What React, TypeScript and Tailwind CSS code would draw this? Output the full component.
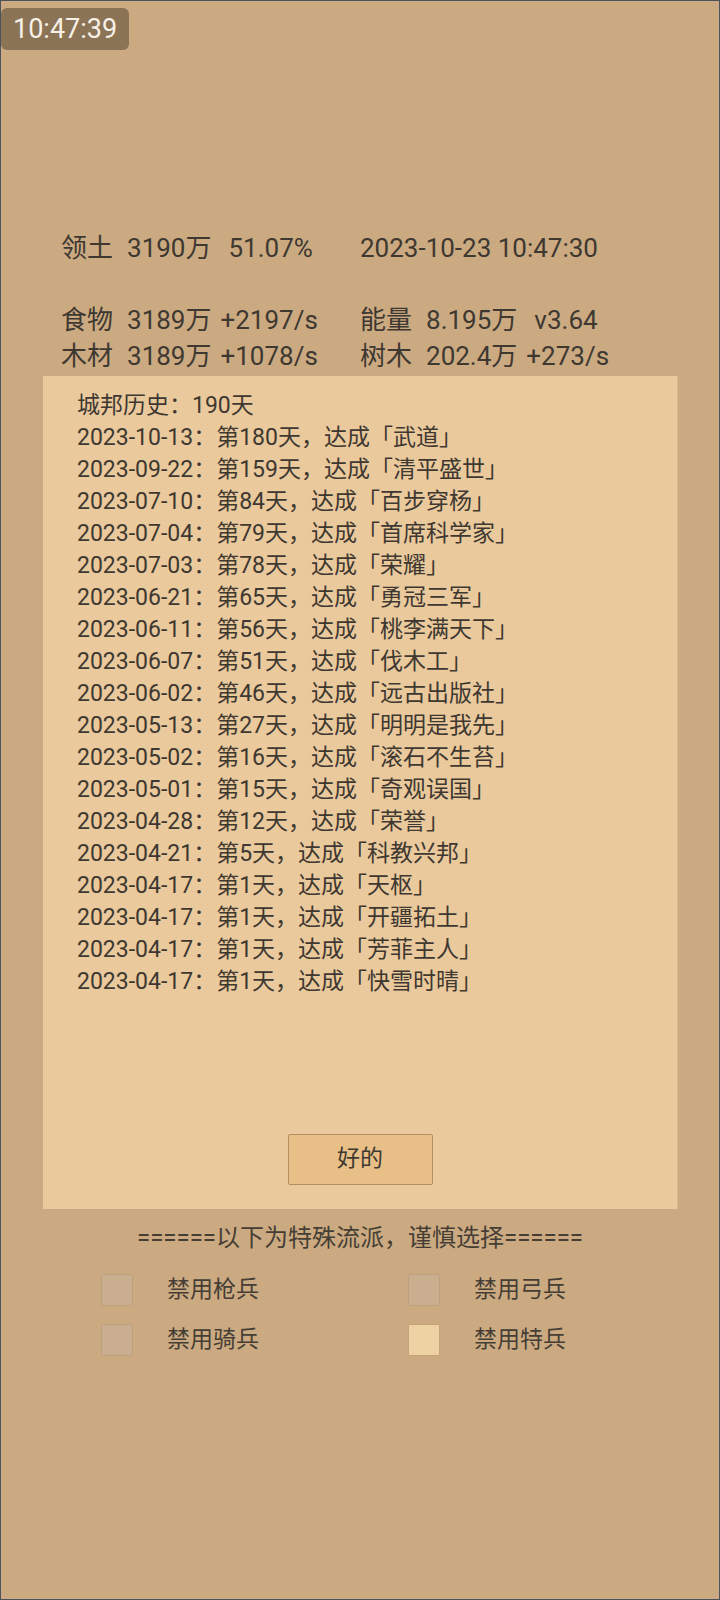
import React from 'react'

const stats = [
  [
    ['领土', '3190万', '51.07%'],
    ['', '2023-10-23 10:47:30', ''],
  ],
  null,
  [
    ['食物', '3189万', '+2197/s'],
    ['能量', '8.195万', 'v3.64'],
  ],
  [
    ['木材', '3189万', '+1078/s'],
    ['树木', '202.4万', '+273/s'],
  ],
] as const

const history = [
  ['2023-10-13', '第180天', '武道'],
  ['2023-09-22', '第159天', '清平盛世'],
  ['2023-07-10', '第84天', '百步穿杨'],
  ['2023-07-04', '第79天', '首席科学家'],
  ['2023-07-03', '第78天', '荣耀'],
  ['2023-06-21', '第65天', '勇冠三军'],
  ['2023-06-11', '第56天', '桃李满天下'],
  ['2023-06-07', '第51天', '伐木工'],
  ['2023-06-02', '第46天', '远古出版社'],
  ['2023-05-13', '第27天', '明明是我先'],
  ['2023-05-02', '第16天', '滚石不生苔'],
  ['2023-05-01', '第15天', '奇观误国'],
  ['2023-04-28', '第12天', '荣誉'],
  ['2023-04-21', '第5天', '科教兴邦'],
  ['2023-04-17', '第1天', '天枢'],
  ['2023-04-17', '第1天', '开疆拓土'],
  ['2023-04-17', '第1天', '芳菲主人'],
  ['2023-04-17', '第1天', '快雪时晴'],
]

const bans = [
  ['禁用枪兵', false],
  ['禁用弓兵', false],
  ['禁用骑兵', false],
  ['禁用特兵', true],
] as const

function StatCell({ cell }: { cell: readonly [string, string, string] }) {
  const [label, value, rate] = cell
  // "+" rates sit a little closer to the value than the others
  const rateGap = rate.startsWith('+') ? 'ml-[9px]' : 'ml-[17px]'
  return (
    <div className="whitespace-nowrap">
      {label && <span>{label}</span>}
      <span className={label ? 'ml-[14px]' : ''}>{value}</span>
      {rate && <span className={rateGap}>{rate}</span>}
    </div>
  )
}

export default function App() {
  return (
    <div
      className="relative w-[720px] h-[1600px] bg-[#cbaa81] border border-[#4d535c] text-[#3e3831] overflow-hidden"
      style={{ fontFamily: "Roboto, 'Noto Sans CJK SC', sans-serif" }}
    >
      {/* clock badge */}
      <div className="absolute left-0 top-[7px] w-[128px] h-[42px] rounded-md bg-[#8b7355] text-[#f6f0e6] text-[27px] leading-[42px] pl-[12px]">
        10:47:39
      </div>

      {/* stats */}
      <div className="pt-[229px] pl-[60px] text-[26px] leading-[36px]">
        {stats.map((row, i) =>
          row ? (
            <div key={i} className="grid grid-cols-[299px_1fr]">
              <StatCell cell={row[0]} />
              <StatCell cell={row[1]} />
            </div>
          ) : (
            <div key={i} className="h-[36px]" />
          )
        )}
      </div>

      {/* history dialog */}
      <div className="ml-[42px] mt-[2px] w-[634px] h-[833px] bg-[#eac99c] shadow-[1px_0_0_#d9b98c] flex flex-col pl-[34px] pt-[14px] pb-[24px]">
        <div className="text-[23px] leading-[32px]">
          <div>城邦历史：190天</div>
          {history.map(([date, day, name], i) => (
            <div key={i} className="whitespace-nowrap">
              {date}：{day}，达成「{name}」
            </div>
          ))}
        </div>
        <div className="mt-auto flex justify-center pr-[34px]">
          <button className="w-[145px] h-[51px] bg-[#e8bf86] border border-[#b48f60] rounded-[2px] text-[23px] text-[#3e3831]">
            好的
          </button>
        </div>
      </div>

      {/* special options */}
      <div className="mt-[14px] text-center text-[24px] leading-[30px] text-[#463e35]">
        ======以下为特殊流派，谨慎选择======
      </div>
      <div className="mt-[20px] pl-[100px] grid grid-cols-[307px_1fr] gap-y-[15px]">
        {bans.map(([label, checked]) => (
          <div key={label} className="flex items-center">
            <div
              className={
                checked
                  ? 'w-[32px] h-[32px] rounded-[2px] bg-[#efd2a4] border border-[#c4a37a]'
                  : 'w-[32px] h-[32px] rounded-[2px] bg-[#c9ae8f] border border-[#bfa07d]'
              }
            />
            <span className="ml-[34px] text-[23px] text-[#463e35]">{label}</span>
          </div>
        ))}
      </div>
    </div>
  )
}
